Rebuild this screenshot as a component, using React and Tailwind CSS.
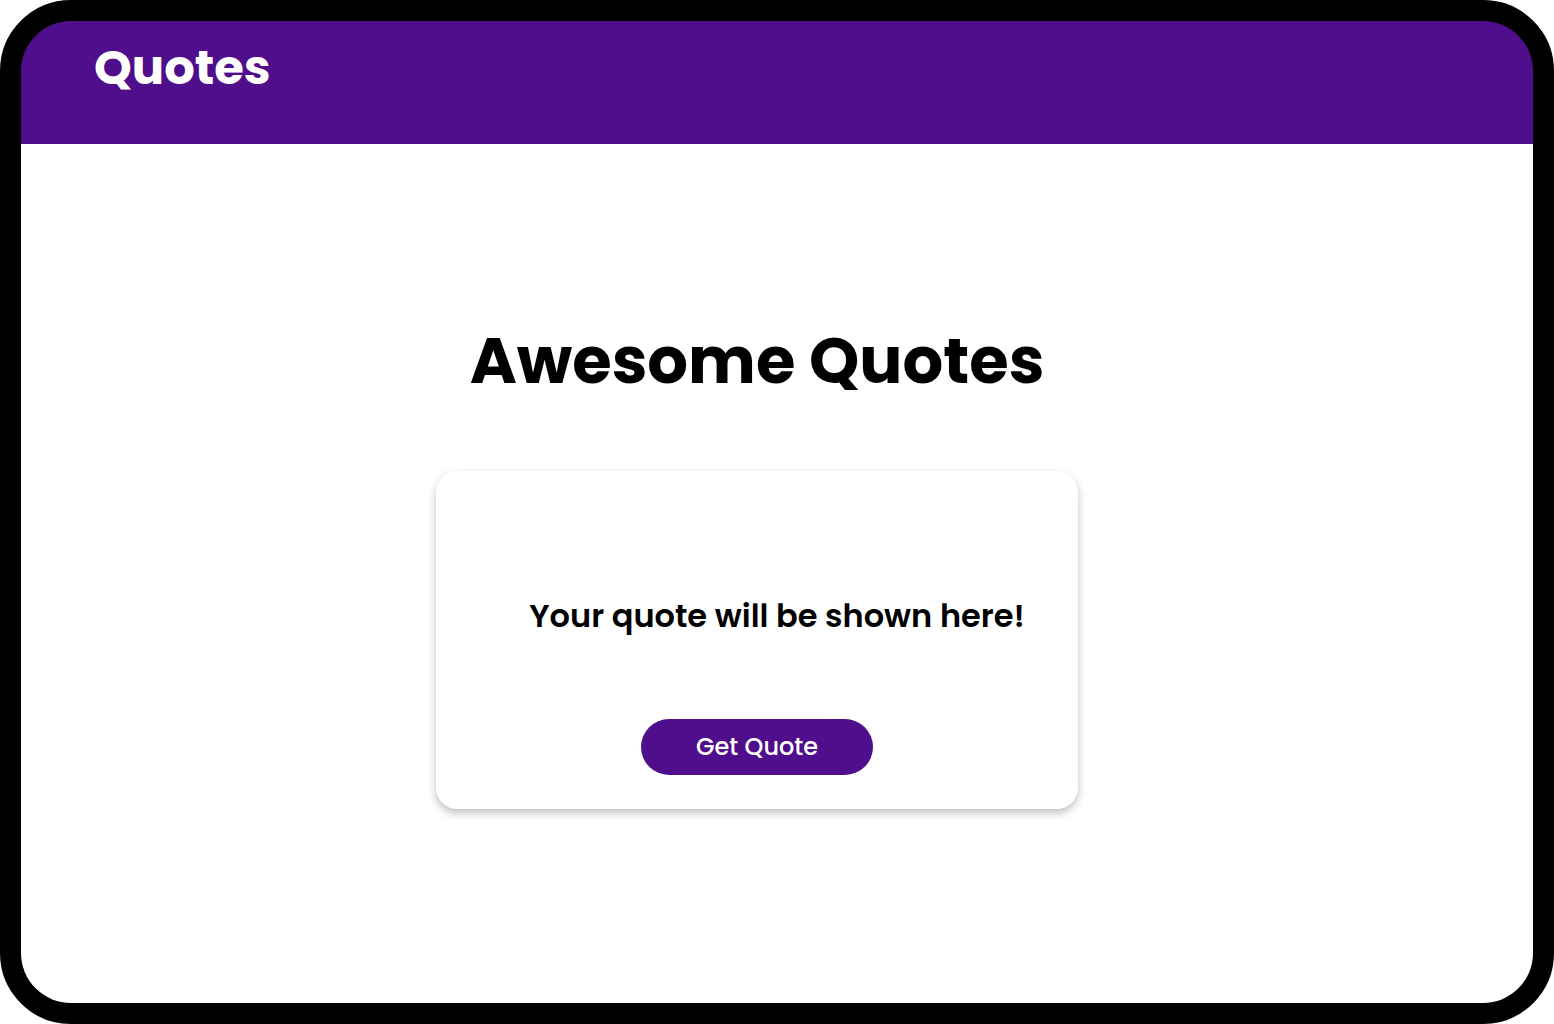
export default function App() {
  return (
    <div className="flex min-h-screen bg-white font-['Poppins','Inter',sans-serif] text-black">
      <div className="flex flex-1 flex-col overflow-hidden rounded-[71px] border-[21px] border-black bg-black">
        <header className="h-[123px] bg-[#4f0e8b] px-[73px] pt-4">
          <a href="#" className="inline-block text-5xl leading-[62px] font-bold text-white">Quotes</a>
        </header>
        <main className="flex flex-1 flex-col items-center bg-white pr-10 pt-[178px]">
          <h1 className="text-[64px] leading-[78px] font-bold">Awesome Quotes</h1>
          <section className="mt-[71px] flex min-h-[338px] w-full max-w-[642px] flex-col items-center rounded-[21px] bg-white pt-[123px] pb-[34px] shadow-[0_4px_8px_rgba(0,0,0,0.25)]">
            <p className="pl-10 text-[32px] leading-[44px] font-semibold">Your quote will be shown here!</p>
            <button type="button" className="mt-auto h-14 w-[232px] rounded-full bg-[#4f0e8b] text-2xl font-medium text-white">Get Quote</button>
          </section>
        </main>
      </div>
    </div>
  );
}
